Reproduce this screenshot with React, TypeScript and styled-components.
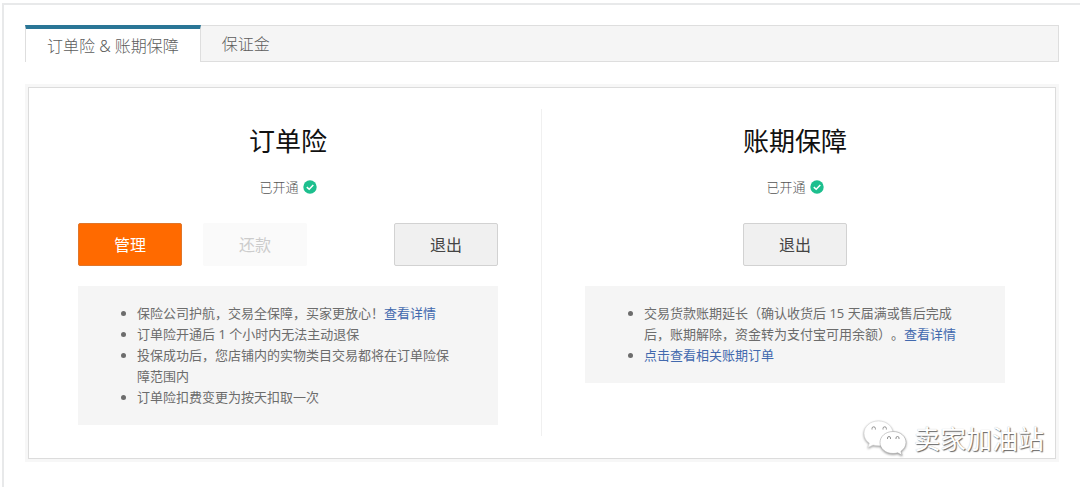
import React from "react";
import styled, { createGlobalStyle, css } from "styled-components";

const GlobalStyle = createGlobalStyle`
  *, *::before, *::after { box-sizing: border-box; }
  body {
    margin: 0;
    background: #fff;
    color: #6c6c6c;
    font-family: "Noto Sans", "Noto Sans CJK SC", sans-serif;
    font-size: 13px;
    text-spacing-trim: space-all;
  }
  button { font-family: inherit; }
`;

const Page = styled.main`
  min-height: calc(100vh - 3px);
  margin: 3px 0 0 2px;
  padding: 20px 21px;
  border-top: 2px solid #e8e9ea;
  border-left: 2px solid #e8e9ea;
`;

const TabBar = styled.div`
  display: flex;
  height: 37px;
  background: #f5f5f5;
  border: 1px solid #dedede;
  border-left: 0;
`;

const Tab = styled.button<{ $active?: boolean }>`
  margin: 0;
  padding: 0 21px;
  border: 0;
  background: transparent;
  color: #5c5c5c;
  font-size: 16px;
  line-height: 24px;
  font-weight: 300;
  ${(p) =>
    p.$active &&
    css`
      margin: -1px 0;
      padding: 0 21px;
      background: #fff;
      border: 1px solid #dedede;
      border-top: 4px solid #2a7696;
      border-bottom: 0;
    `}
`;

const Panel = styled.section`
  position: relative;
  display: grid;
  grid-template-columns: 1fr 1px 1fr;
  column-gap: 43px;
  margin: 25px 3px 0;
  padding: 21px 50px 22px 49px;
  border: 1px solid #dcdcdc;
  box-shadow: 0 0 0 3px #f7f7f7;
`;

const Divider = styled.div`
  background: #f0f0f0;
`;

const Product = styled.article`
  display: flex;
  flex-direction: column;
  padding-bottom: 11px;
`;

const Title = styled.h2`
  margin: 12px 0 0;
  color: #111;
  font-size: 26px;
  line-height: 40px;
  font-weight: 400;
  text-align: center;
`;

const Status = styled.p`
  display: flex;
  align-items: center;
  justify-content: center;
  gap: 4px;
  margin: 16px 0 26px;
  color: #555;
  line-height: 20px;
  font-weight: 300;
`;

const Actions = styled.div<{ $centered?: boolean }>`
  display: flex;
  justify-content: ${(p) => (p.$centered ? "center" : "flex-start")};
  gap: 21px;
`;

const tones = {
  primary: css`
    background: #ff6a00;
    border-color: #e0762a;
    color: #fff;
  `,
  muted: css`
    background: #fafafa;
    border-color: #fafafa;
    color: #ccc;
  `,
  plain: css`
    background: #f0f0f0;
    border-color: #d2d2d2;
    color: #444;
  `,
};

const Button = styled.button<{ $tone: keyof typeof tones; $end?: boolean }>`
  width: 104px;
  height: 43px;
  padding: 0;
  border: 1px solid;
  border-radius: 2px;
  font-size: 16px;
  line-height: 24px;
  ${(p) => tones[p.$tone]}
  ${(p) => p.$end && "margin-left: auto;"}
`;

const Notes = styled.ul`
  margin: 20px 0 0;
  padding: 17px 42px 17px 59px;
  background: #f5f5f5;
  line-height: 21px;
`;

const Link = styled.a`
  color: #4269ae;
  text-decoration: none;
`;

const Watermark = styled.div`
  position: absolute;
  right: 11px;
  bottom: 0;
  display: flex;
  align-items: center;
  gap: 7px;
  color: #fff;
  font-size: 26px;
  line-height: 38px;
  text-shadow: 1px 1px 1px #666, 0 0 1px #bbb;
`;

const ChatDrawing = styled.svg`
  filter: drop-shadow(0 1px 1px #999);
`;

const CheckIcon = () => (
  <svg width="14" height="14" viewBox="0 0 14 14" aria-hidden="true">
    <circle cx="7" cy="7" r="6.7" fill="#1dbf8e" />
    <path d="M3.8 7.1 6.2 9.3 10.3 5" fill="none" stroke="#fff" strokeWidth="1.5" />
  </svg>
);

const ChatIcon = () => (
  <ChatDrawing width="44" height="38" viewBox="0 0 44 38" fill="#fff" stroke="#d8d8d8" strokeWidth="0.6" aria-hidden="true">
    <path d="M15.5 1C7.3 1 1 6.500 1 13.500c0 4 2 7.300 5.300 9.600L5 27.600l5-2.600c1.800.5 3.600.7 5.500.7 8.200 0 14.500-5.400 14.500-12.200S23.700 1 15.500 1Z" />
    <path d="M30 11.500c-7.400 0-13 4.900-13 11s5.600 11 13 11c1.600 0 3.200-.2 4.700-.7l4.400 2.500-1.200-4C41 29.300 43 26.200 43 22.500c0-6.100-5.600-11-13-11Z" stroke="#aaa" />
    <g stroke="#777" strokeWidth="0.8">
      <path d="M9 9.500v-1a1.700 1.700 0 0 1 3.400 0v1M20 9.500v-1a1.700 1.700 0 0 1 3.400 0v1" />
      <path d="M24.500 19v-1a1.500 1.500 0 0 1 3 0v1M33 19v-1a1.500 1.500 0 0 1 3 0v1" />
    </g>
  </ChatDrawing>
);

const Opened = () => (
  <Status>
    已开通
    <CheckIcon />
  </Status>
);

export default function App() {
  return (
    <>
      <GlobalStyle />
      <Page>
        <TabBar role="tablist">
          <Tab type="button" role="tab" aria-selected="true" $active>
            订单险 &amp; 账期保障
          </Tab>
          <Tab type="button" role="tab" aria-selected="false">
            保证金
          </Tab>
        </TabBar>
        <Panel>
          <Product>
            <Title>订单险</Title>
            <Opened />
            <Actions>
              <Button type="button" $tone="primary">管理</Button>
              <Button type="button" $tone="muted" disabled>还款</Button>
              <Button type="button" $tone="plain" $end>退出</Button>
            </Actions>
            <Notes>
              <li>
                保险公司护航，交易全保障，买家更放心！<Link href="#order-detail">查看详情</Link>
              </li>
              <li>订单险开通后 1 个小时内无法主动退保</li>
              <li>投保成功后，您店铺内的实物类目交易都将在订单险保障范围内</li>
              <li>订单险扣费变更为按天扣取一次</li>
            </Notes>
          </Product>
          <Divider />
          <Product>
            <Title>账期保障</Title>
            <Opened />
            <Actions $centered>
              <Button type="button" $tone="plain">退出</Button>
            </Actions>
            <Notes>
              <li>
                交易货款账期延长（确认收货后 15 天届满或售后完成后，账期解除，资金转为支付宝可用余额）。
                <Link href="#term-detail">查看详情</Link>
              </li>
              <li>
                <Link href="#term-orders">点击查看相关账期订单</Link>
              </li>
            </Notes>
          </Product>
          <Watermark>
            <ChatIcon />
            卖家加油站
          </Watermark>
        </Panel>
      </Page>
    </>
  );
}
